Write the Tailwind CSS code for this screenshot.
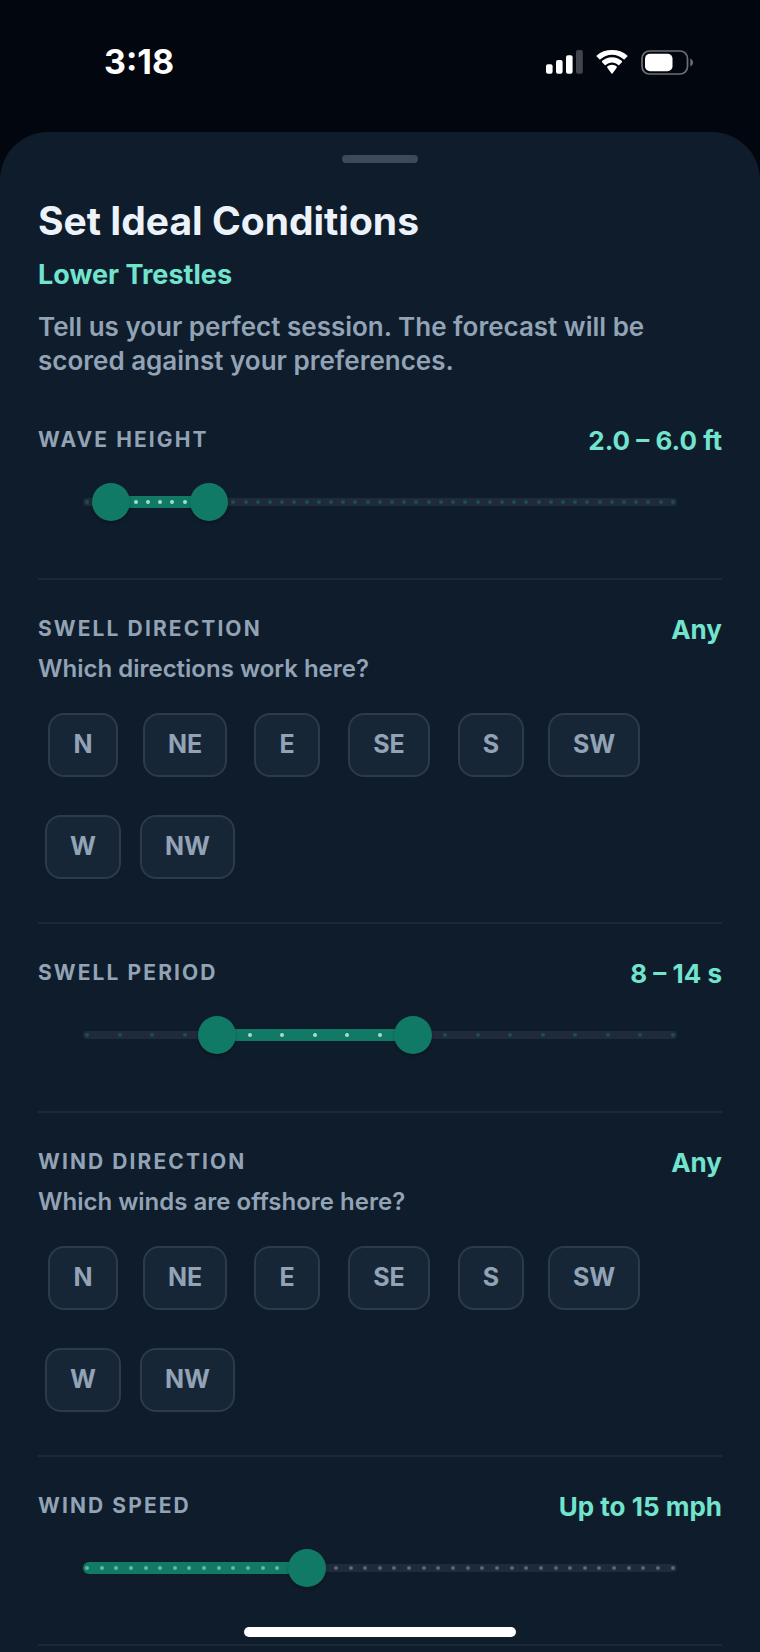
<!DOCTYPE html>
<html lang="en">
  <head>
    <meta charset="UTF-8" />
    <meta name="viewport" content="width=device-width, initial-scale=1.0" />
    <title>Set Ideal Conditions</title>
    <script src="https://cdn.jsdelivr.net/npm/@tailwindcss/browser@4"></script>
  </head>
  <body class="bg-[#02060e] font-['Inter',sans-serif] antialiased">
    <div class="flex min-h-screen flex-col">
      <!-- status bar -->
      <header class="flex h-[132px] items-start justify-between pt-[42px] pr-[67px] pl-[104px] text-white">
        <span class="text-[34px] leading-10 font-bold">3:18</span>
        <div class="flex h-10 items-center gap-[13px]">
          <svg class="h-6 w-[37px]" viewBox="0 0 37 24" fill="currentColor" aria-label="Signal">
            <rect x="0" y="14.3" width="6.6" height="9.5" rx="2" />
            <rect x="10" y="10" width="6.6" height="13.8" rx="2" />
            <rect x="20" y="5.2" width="6.6" height="18.6" rx="2" />
            <rect x="30" y="0" width="6.8" height="23.8" rx="2" opacity="0.25" />
          </svg>
          <svg class="h-6 w-8" viewBox="0 0 32 24" fill="currentColor" aria-label="Wi-Fi">
            <path d="M16 4.7c4.400 0 8.500 1.700 11.600 4.600.3.3.7.3 1 0l2.700-2.700c.3-.3.3-.8 0-1.100C27.200 1.800 21.800 0 16 0S4.800 1.800.7 5.500c-.3.3-.3.8 0 1.100l2.700 2.700c.3.3.7.3 1 0C7.500 6.400 11.600 4.700 16 4.700z" />
            <path d="M16 12.500c2.300 0 4.500.9 6.200 2.400.3.3.7.3 1 0l2.700-2.700c.3-.3.3-.8 0-1.100-2.700-2.500-6.100-3.800-9.900-3.800s-7.200 1.300-9.900 3.800c-.3.3-.3.8 0 1.100l2.700 2.700c.3.3.7.3 1 0 1.700-1.500 3.900-2.400 6.200-2.400z" />
            <path d="M20.700 17.700c.3-.3.3-.8 0-1.100-1.300-1.100-2.900-1.800-4.700-1.800s-3.400.7-4.700 1.800c-.3.3-.3.800 0 1.100l4.200 5.900c.3.300.7.300 1 0z" />
          </svg>
          <svg class="h-[25px] w-[52px]" viewBox="0 0 52 25" aria-label="Battery">
            <rect x="1" y="1" width="45.500" height="23" rx="7.500" fill="none" stroke="#6c6f75" stroke-width="1.700" />
            <rect x="4" y="3.700" width="27.500" height="17.600" rx="5" fill="#fff" />
            <path d="M49.300 8.500c1.700.8 2.700 2.300 2.700 4s-1 3.200-2.700 4z" fill="#6c6f75" />
          </svg>
        </div>
      </header>

      <main class="flex-1 rounded-t-[48px] bg-[#0f1c2b] px-[38px] pt-[23px]">
        <div class="mx-auto h-2 w-[76px] rounded-full bg-[#3d4a5a]"></div>

        <h1 class="mt-8 text-[39px] leading-[52px] font-bold text-[#ecf2f9]">Set Ideal Conditions</h1>
        <p class="mt-[10px] text-[27px] leading-9 font-bold text-[#72e4ce]">Lower Trestles</p>
        <p class="mt-[17px] text-[26px] leading-[34px] font-semibold text-[#92a3b5]">
          Tell us your perfect session. The forecast will be scored against your preferences.
        </p>

        <section class="mt-[42px] h-[160px] border-b-2 border-[#1d2938]">
          <div class="flex h-10 items-center justify-between">
            <h2 class="text-[21px] font-bold tracking-widest text-[#92a3b5]">WAVE HEIGHT</h2>
            <output class="text-[26px] font-bold text-[#72e4ce]" id="waveValue">2.0 – 6.0 ft</output>
          </div>
          <div id="wave"></div>
        </section>

        <section class="border-b-2 border-[#1d2938] pt-[29px] pb-[30px]">
          <div class="flex h-10 items-center justify-between">
            <h2 class="text-[21px] font-bold tracking-widest text-[#92a3b5]">SWELL DIRECTION</h2>
            <output class="text-[26px] font-bold text-[#72e4ce]">Any</output>
          </div>
          <p class="mt-1 text-[24px] leading-8 font-semibold text-[#92a3b5]">Which directions work here?</p>
          <div class="directions mt-[15px] flex flex-wrap gap-3"></div>
        </section>

        <section class="h-[189px] border-b-2 border-[#1d2938] pt-[29px]">
          <div class="flex h-10 items-center justify-between">
            <h2 class="text-[21px] font-bold tracking-widest text-[#92a3b5]">SWELL PERIOD</h2>
            <output class="text-[26px] font-bold text-[#72e4ce]" id="periodValue">8 – 14 s</output>
          </div>
          <div id="period"></div>
        </section>

        <section class="border-b-2 border-[#1d2938] pt-[29px] pb-[30px]">
          <div class="flex h-10 items-center justify-between">
            <h2 class="text-[21px] font-bold tracking-widest text-[#92a3b5]">WIND DIRECTION</h2>
            <output class="text-[26px] font-bold text-[#72e4ce]">Any</output>
          </div>
          <p class="mt-1 text-[24px] leading-8 font-semibold text-[#92a3b5]">Which winds are offshore here?</p>
          <div class="directions mt-[15px] flex flex-wrap gap-3"></div>
        </section>

        <section class="h-[189px] border-b-2 border-[#1d2938] pt-[29px]">
          <div class="flex h-10 items-center justify-between">
            <h2 class="text-[21px] font-bold tracking-widest text-[#92a3b5]">WIND SPEED</h2>
            <output class="text-[26px] font-bold text-[#72e4ce]" id="windValue">Up to 15 mph</output>
          </div>
          <div id="wind"></div>
        </section>
      </main>
    </div>

    <!-- home indicator -->
    <div class="fixed bottom-[15px] left-1/2 h-[10px] w-[272px] -translate-x-1/2 rounded-full bg-white"></div>

    <script>
      const thumbClass =
        "absolute -left-[15px] top-1/2 h-[38px] w-[calc(100%+30px)] -translate-y-1/2 appearance-none bg-transparent pointer-events-none outline-none " +
        "[&::-webkit-slider-thumb]:pointer-events-auto [&::-webkit-slider-thumb]:size-[38px] [&::-webkit-slider-thumb]:appearance-none " +
        "[&::-webkit-slider-thumb]:rounded-full [&::-webkit-slider-thumb]:bg-[#107a66] [&::-webkit-slider-thumb]:shadow-[0_2px_3px_rgba(0,0,0,0.25)]";

      function createSlider(id, options) {
        const root = document.getElementById(id);
        const inputs = options.values
          .map((v, i) => `<input type="range" aria-label="${options.labels[i]}" min="${options.min}" max="${options.max}" step="${options.step}" value="${v}" class="${thumbClass}" />`)
          .join("");

        root.innerHTML = `
          <div class="relative mx-[45px] mt-[23px] h-[38px]">
            <div class="absolute inset-x-0 top-[15px] h-2 rounded-full bg-[#1f2a3a]"></div>
            <div class="absolute inset-x-1 top-[13px] h-3">
              <div class="fill absolute h-3 bg-[#107a66] ${options.values.length === 1 ? "rounded-l-full" : ""}"></div>
              <div class="ticks absolute inset-x-0 top-1 flex justify-between"></div>
            </div>
            ${inputs}
          </div>`;

        const update = () => {
          const values = [...root.querySelectorAll("input")].map((el) => Number(el.value)).sort((a, b) => a - b);
          const high = values[values.length - 1];
          const low = values.length > 1 ? values[0] : options.min;
          const pct = (v) => ((v - options.min) / (options.max - options.min)) * 100;
          const fill = root.querySelector(".fill");

          // a single slider fills from the rounded end of the track
          const start = values.length > 1 ? 0 : 4;
          fill.style.left = `calc(${pct(low)}% - ${start}px)`;
          fill.style.width = `calc(${pct(high) - pct(low)}% + ${start}px)`;

          let dots = "";
          for (let v = options.min; v <= options.max; v += options.step) {
            const color = v >= low && v <= high ? options.activeTick : options.tick;
            dots += `<i class="-mx-0.5 block size-1 shrink-0 rounded-full ${color}"></i>`;
          }
          root.querySelector(".ticks").innerHTML = dots;
          document.getElementById(id + "Value").textContent = options.format(values);
        };

        root.addEventListener("input", update);
        update();
      }

      createSlider("wave", {
        min: 1, max: 25, step: 0.5, values: [2, 6],
        labels: ["Minimum wave height", "Maximum wave height"],
        tick: "bg-[#1b4f50]", activeTick: "bg-[#a6dccf]",
        format: (v) => `${v[0].toFixed(1)} – ${v[1].toFixed(1)} ft`,
      });
      createSlider("period", {
        min: 4, max: 22, step: 1, values: [8, 14],
        labels: ["Minimum swell period", "Maximum swell period"],
        tick: "bg-[#1b4f50]", activeTick: "bg-[#a6dccf]",
        format: (v) => `${v[0]} – ${v[1]} s`,
      });
      createSlider("wind", {
        min: 0, max: 40, step: 1, values: [15],
        labels: ["Maximum wind speed"],
        tick: "bg-[#5a6573]", activeTick: "bg-[#62b8a2]",
        format: (v) => `Up to ${v[0]} mph`,
      });

      document.querySelectorAll(".directions").forEach((el) => {
        el.innerHTML = ["N", "NE", "E", "SE", "S", "SW", "W", "NW"]
          .map((d) => `
            <div class="flex h-[90px] min-w-[90px] items-center justify-center">
              <button type="button" aria-pressed="false" class="h-16 rounded-2xl border-2 border-[#2c3a4a] bg-[#172637] px-[23px] text-[25px] font-bold text-[#92a3b5]">${d}</button>
            </div>`)
          .join("");
      });
    </script>
  </body>
</html>
